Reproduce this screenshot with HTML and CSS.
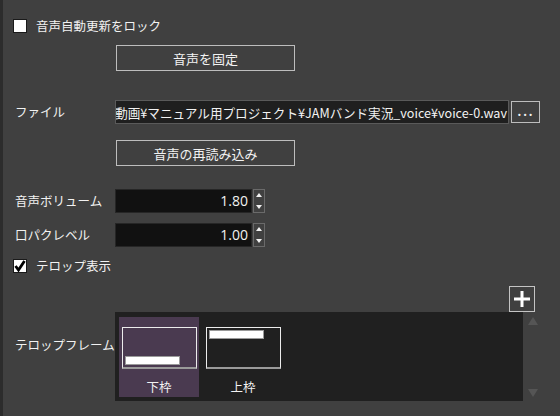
FILE: index.html
```html
<!DOCTYPE html>
<html lang="ja">

<head>
    <meta charset="UTF-8">
    <title>音声設定</title>
    <link rel="stylesheet" href="styles.css">
</head>

<body>
    <div class="panel">
        <label class="check-row first">
            <span class="box"></span>
            <span>音声自動更新をロック</span>
        </label>

        <div class="row btn-row">
            <span class="label"></span>
            <button class="btn">音声を固定</button>
        </div>

        <div class="row file-row">
            <span class="label">ファイル</span>
            <div class="path"><span>動画¥マニュアル用プロジェクト¥JAMバンド実況_voice¥voice-0.wav</span></div>
            <button class="browse">...</button>
        </div>

        <div class="row reload-row">
            <span class="label"></span>
            <button class="btn">音声の再読み込み</button>
        </div>

        <div class="row num-row volume">
            <span class="label">音声ボリューム</span>
            <div class="num">1.80</div>
            <div class="spin"><i class="up"></i><i class="down"></i></div>
        </div>

        <div class="row num-row lip">
            <span class="label">口パクレベル</span>
            <div class="num">1.00</div>
            <div class="spin"><i class="up"></i><i class="down"></i></div>
        </div>

        <label class="check-row second">
            <span class="box">
                <svg width="12" height="12" viewBox="0 0 12 12"><path d="M1.5 6 L4.5 10 L10.5 1" fill="none" stroke="#000" stroke-width="2.8"/></svg>
            </span>
            <span>テロップ表示</span>
        </label>

        <div class="plus-row">
            <button class="plus">
                <svg width="18" height="18" viewBox="0 0 18 18"><path d="M9 1 V17 M1 9 H17" stroke="#fff" stroke-width="3"/></svg>
            </button>
        </div>

        <div class="row frame-row">
            <span class="label">テロップフレーム</span>
            <div class="frames">
                <div class="frame selected">
                    <div class="thumb"><div class="bar bottom"></div></div>
                    <div class="name">下枠</div>
                </div>
                <div class="frame">
                    <div class="thumb"><div class="bar top"></div></div>
                    <div class="name">上枠</div>
                </div>
            </div>
            <div class="scroll">
                <i class="up"></i>
                <i class="down"></i>
            </div>
        </div>
    </div>
</body>

</html>
```

FILE: styles.css
```css
html {
    height: 100%;
    background: #404040;
}

body {
    margin: 0;
    height: 100%;
    border-left: 3px solid #2c2c2c;
    font-family: "Noto Sans CJK JP", "Noto Sans", sans-serif;
    font-size: 12.5px;
    color: #f2f2f2;
}

.panel {
    padding: 0 0 0 12px;
    display: flex;
    flex-direction: column;
}

.row {
    display: flex;
    align-items: center;
}

.label {
    width: 100px;
    flex: none;
    line-height: 16px;
}

/* checkbox rows */
.check-row {
    display: flex;
    align-items: center;
    gap: 9px;
    margin-left: -2px;
    height: 14px;
    line-height: 14px;
}

.check-row.first {
    margin-top: 19px;
}

.check-row.second {
    margin-top: 12px;
}

.box {
    width: 12px;
    height: 12px;
    background: #fff;
    border: 1px solid #1a1a1a;
    display: flex;
    align-items: center;
    justify-content: center;
}

/* plain buttons */
.btn {
    width: 179px;
    height: 26px;
    background: transparent;
    border: 1px solid #bdbdbd;
    color: #f2f2f2;
    font-family: inherit;
    font-size: 13px;
    padding: 0;
}

.btn-row {
    margin-top: 12px;
    margin-left: 1px;
}

.reload-row {
    margin-top: 16px;
    margin-left: 1px;
}

/* file path */
.file-row {
    margin-top: 29px;
    height: 24px;
}

.path {
    width: 391px;
    height: 22px;
    background: #1f1f1f;
    border: 1px solid #5a5a5a;
    display: flex;
    justify-content: flex-end;
    align-items: center;
    overflow: hidden;
    white-space: nowrap;
    font-size: 12.6px;
    padding-right: 1px;
}

.browse {
    width: 29px;
    height: 22px;
    margin-left: 2px;
    background: transparent;
    border: 1px solid #bdbdbd;
    color: #f2f2f2;
    font-size: 18px;
    line-height: 14px;
    padding: 0 0 6px;
    letter-spacing: 1px;
    font-family: "Open Sans", sans-serif;
}

/* numeric inputs */
.num-row.volume {
    margin-top: 23px;
}

.num-row.lip {
    margin-top: 10px;
}

.num {
    width: 132px;
    height: 22px;
    background: #111;
    border: 1px solid #262626;
    text-align: right;
    padding-right: 3px;
    font-family: "Open Sans", sans-serif;
    font-size: 14px;
    line-height: 22px;
}

.spin {
    width: 10px;
    margin-left: 1px;
    border: 1px solid #6a6a6a;
    display: flex;
    flex-direction: column;
    justify-content: space-between;
    align-items: center;
    padding: 3px 0;
    height: 16px;
}

.spin i {
    width: 0;
    height: 0;
    border-left: 3px solid transparent;
    border-right: 3px solid transparent;
}

.spin .up {
    border-bottom: 4px solid #f0f0f0;
}

.spin .down {
    border-top: 4px solid #f0f0f0;
}

/* add frame button */
.plus-row {
    margin-top: 13px;
    width: 520px;
    display: flex;
    justify-content: flex-end;
}

.plus {
    width: 26px;
    height: 26px;
    background: transparent;
    border: 1px solid #c4c4c4;
    padding: 0;
    display: flex;
    align-items: center;
    justify-content: center;
}

/* frame list */
.frame-row {
    align-items: flex-start;
    height: 89px;
}

.frame-row .label {
    margin-top: 25px;
}

.frames {
    width: 400px;
    height: 79px;
    background: #202020;
    padding: 5px 4px;
    display: flex;
    gap: 4px;
}

.frame {
    width: 80px;
    height: 80px;
    padding: 10px 0 0 3px;
    box-sizing: border-box;
}

.frame.selected {
    background: #4a3a50;
}

.thumb {
    width: 73px;
    height: 39px;
    border: 1px solid #ececec;
    border-bottom: 2px solid #9a9a9a;
    position: relative;
}

.bar {
    position: absolute;
    left: 2px;
    width: 53px;
    height: 7px;
    background: #fff;
    border: 1px solid #9a9a9a;
}

.bar.bottom {
    bottom: 2px;
}

.bar.top {
    top: 2px;
}

.name {
    text-align: center;
    margin-top: 10px;
    padding-right: 3px;
    line-height: 16px;
}

.scroll {
    width: 20px;
    height: 89px;
    display: flex;
    flex-direction: column;
    justify-content: space-between;
    align-items: center;
    padding: 5px 0 4px;
    box-sizing: border-box;
}

.scroll i {
    width: 0;
    height: 0;
    border-left: 5px solid transparent;
    border-right: 5px solid transparent;
}

.scroll .up {
    border-bottom: 8px solid #555;
}

.scroll .down {
    border-top: 8px solid #555;
}
```
